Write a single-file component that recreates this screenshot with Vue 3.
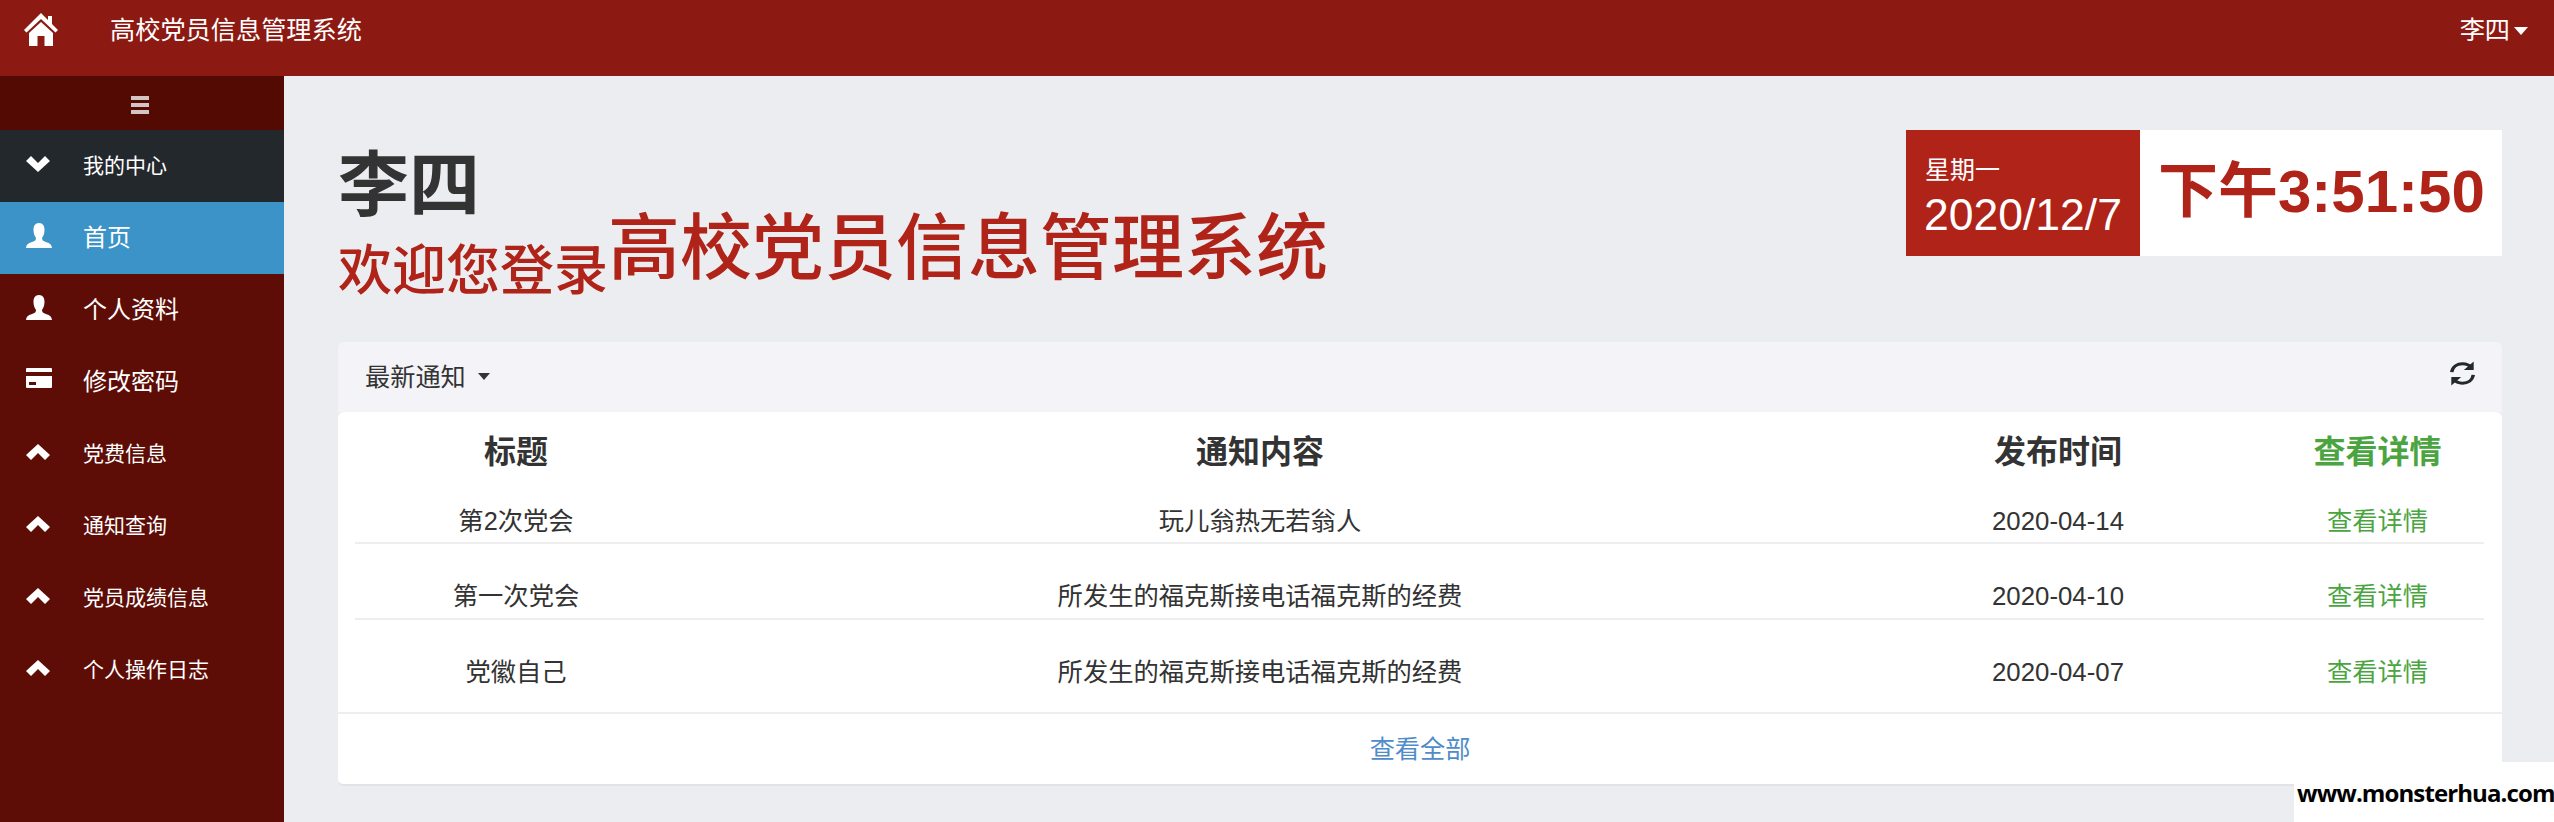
<script setup>
const nav = [
  { label: '我的中心', icon: 'down', kind: 'center', big: false },
  { label: '首页', icon: 'user', kind: 'active', big: true },
  { label: '个人资料', icon: 'user', kind: '', big: true },
  { label: '修改密码', icon: 'card', kind: '', big: true },
  { label: '党费信息', icon: 'up', kind: '', big: false },
  { label: '通知查询', icon: 'up', kind: '', big: false },
  { label: '党员成绩信息', icon: 'up', kind: '', big: false },
  { label: '个人操作日志', icon: 'up', kind: '', big: false },
]
const rows = [
  { title: '第2次党会', body: '玩儿翁热无若翁人', date: '2020-04-14' },
  { title: '第一次党会', body: '所发生的福克斯接电话福克斯的经费', date: '2020-04-10' },
  { title: '党徽自己', body: '所发生的福克斯接电话福克斯的经费', date: '2020-04-07' },
]
</script>

<template>
  <div class="page">
    <header class="topbar">
      <svg class="home" viewBox="0 0 34 33"><path d="M17 0 L24 7 V3 H28 V11 L34 17 L31.500 19.500 L17 6 L2.500 19.500 L0 17Z M5 20 L17 9 L29 20 V33 H20.500 V23 H13.500 V33 H5Z" fill="#fff"/></svg>
      <span class="brand">高校党员信息管理系统</span>
      <span class="account">李四<i class="caret white"></i></span>
    </header>
    <div class="body">
      <aside class="sidebar">
        <div class="toggle">
          <svg viewBox="0 0 18 18" class="burger"><path d="M0 0H18V4H0Z M0 7H18V11H0Z M0 14H18V18H0Z" fill="#d2c5c3"/></svg>
        </div>
        <div v-for="item in nav" :key="item.label" class="nav-item" :class="item.kind">
          <span class="ico">
            <svg v-if="item.icon === 'down'" class="chev" viewBox="0 0 24 16"><path d="M12 16 L24 5 L19 0 L12 7 L5 0 L0 5Z" fill="#fff"/></svg>
            <svg v-else-if="item.icon === 'up'" class="chev" viewBox="0 0 24 16"><path d="M12 0 L24 11 L19 16 L12 9 L5 16 L0 11Z" fill="#fff"/></svg>
            <svg v-else-if="item.icon === 'user'" class="user" viewBox="0 0 26 25"><path d="M13 0 C9 0 7.500 3 7.500 7 C7.500 10 8.500 13 10 15 C10 17 9 18 6 19 C3 20 .5 21 0 25 H26 C25.500 21 23 20 20 19 C17 18 16 17 16 15 C17.500 13 18.500 10 18.500 7 C18.500 3 17 0 13 0Z" fill="#fff"/></svg>
            <svg v-else class="card" viewBox="0 0 26 20"><path d="M1 0H25Q26 0 26 1V4H0V1Q0 0 1 0Z M0 8H26V19Q26 20 25 20H1Q0 20 0 19Z M3 14V17H10V14Z" fill="#fff" fill-rule="evenodd"/></svg>
          </span>
          <span class="label" :class="item.big ? 'big' : 'small'">{{ item.label }}</span>
        </div>
      </aside>
      <main class="main">
        <section class="hero">
          <div class="welcome">
            <h1>李四</h1>
            <div class="sub"><span class="sub-a">欢迎您登录</span><span class="sub-b">高校党员信息管理系统</span></div>
          </div>
          <div class="clock">
            <div class="clock-date">
              <div class="week">星期一</div>
              <div class="date">2020/12/7</div>
            </div>
            <div class="clock-time">下午3:51:50</div>
          </div>
        </section>
        <section class="panel">
          <div class="panel-head">
            <span class="panel-title">最新通知<i class="caret dark"></i></span>
            <svg class="refresh" viewBox="2.500 1 19 22" preserveAspectRatio="none" fill="none">
              <path d="M3.800 10.800 C4.500 6 8 3.500 12 3.500 C15 3.500 17.500 5 19 7" stroke="#23282d" stroke-width="2.600"/>
              <path d="M20.500 1.500 V9 H13Z" fill="#23282d"/>
              <path d="M20.200 13.200 C19.500 18 16 20.500 12 20.500 C9 20.500 6.500 19 5 17" stroke="#23282d" stroke-width="2.600"/>
              <path d="M3.500 22.500 V15 H11Z" fill="#23282d"/>
            </svg>
          </div>
          <div class="panel-card">
            <div class="table">
              <div class="tr th">
                <span>标题</span><span>通知内容</span><span>发布时间</span><span class="green">查看详情</span>
              </div>
              <div v-for="(r, i) in rows" :key="r.date" class="tr td" :class="{ line: i < 2, first: i === 0 }">
                <span>{{ r.title }}</span><span>{{ r.body }}</span><span class="num">{{ r.date }}</span><span class="green">查看详情</span>
              </div>
            </div>
            <div class="panel-foot">查看全部</div>
          </div>
        </section>
      </main>
    </div>
    <div class="watermark">www.monsterhua.com</div>
  </div>
</template>

<style>
html, body { margin: 0; background: #ecedf1; }
</style>

<style scoped>
.page {
  position: relative;
  width: 2554px;
  height: 822px;
  overflow: hidden;
  display: flex;
  flex-direction: column;
  background: #ecedf1;
  color: #333;
  font-family: "Liberation Sans", "Noto Sans CJK SC", sans-serif;
}
.topbar {
  flex: none;
  height: 76px;
  display: flex;
  align-items: flex-start;
  background: #8c1a13;
  color: #fff;
  font-size: 25.200px;
}
.home { width: 34px; height: 33px; margin: 13px 0 0 24px; flex: none; }
.brand { margin: 14px 0 0 52px; line-height: 32px; }
.account { margin: 14px 26px 0 auto; line-height: 32px; display: flex; align-items: center; }
.caret { display: inline-block; width: 0; height: 0; border-left: 7px solid transparent; border-right: 7px solid transparent; }
.caret.white { border-top: 8px solid #fff; margin: 2px 0 0 4px; }
.caret.dark { border-top: 7px solid #333; border-left-width: 6.500px; border-right-width: 6.500px; margin: 4px 0 0 12px; }
.body { flex: 1; display: flex; min-height: 0; }
.sidebar { flex: none; width: 284px; background: #5d0d05; color: #fff; }
.toggle { height: 54px; background: #520a03; display: flex; align-items: center; justify-content: center; padding-right: 4px; box-sizing: border-box; }
.burger { width: 18px; height: 18px; margin-top: 3px; }
.nav-item { height: 72px; display: flex; align-items: center; }
.nav-item.center { background: #23282d; }
.nav-item.active { background: #3c93c7; }
.ico { width: 83px; flex: none; padding-left: 26px; box-sizing: border-box; display: flex; }
.chev { width: 24px; height: 16px; margin-top: -4px; }
.user { width: 26px; height: 25px; margin-top: -5px; }
.card { width: 26px; height: 20px; margin-top: -8px; }
.label { margin-top: -5px; }
.big { font-size: 24px; }
.small { font-size: 21px; }
.main { flex: 1; min-width: 0; padding: 54px 52px 0 54px; }
.hero { display: flex; justify-content: space-between; align-items: flex-start; height: 212px; }
.welcome { margin-top: 16px; }
h1 { margin: 0; font-size: 71px; line-height: 80px; font-weight: 700; color: #333; }
.sub { color: #b02318; display: flex; align-items: flex-end; margin-top: -11px; font-weight: 500; }
.sub-a { font-size: 54px; line-height: 60px; margin: 0 0 4px 0; }
.sub-b { font-size: 72px; line-height: 66px; margin-bottom: 24px; }
.clock { display: flex; height: 126px; }
.clock-date { width: 234px; background: #b02318; color: #fff; padding-left: 18px; box-sizing: border-box; }
.week { font-size: 25px; line-height: 30px; margin-top: 25px; padding-left: 1px; }
.date { font-size: 44.500px; line-height: 50px; margin-top: 5px; }
.clock-time { width: 362px; background: #fff; color: #b02318; font-size: 60px; font-weight: 700; line-height: 124px; padding-left: 18px; box-sizing: border-box; white-space: nowrap; }
.panel-head { height: 70px; background: #f3f3f8; border-radius: 6px 6px 0 0; display: flex; align-items: center; justify-content: space-between; padding: 0 27px; box-sizing: border-box; }
.panel-title { font-size: 25.200px; display: flex; align-items: center; margin-top: -5px; }
.refresh { width: 25px; height: 25px; margin-top: -7px; }
.panel-card { background: #fff; height: 374px; border-radius: 6px; border-bottom: 2px solid #e2e3e8; box-sizing: border-box; display: flex; flex-direction: column; }
.table { height: 302px; flex: none; box-sizing: border-box; padding: 0 18px 0 17px; border-bottom: 2px solid #eeeeef; }
.tr { display: grid; grid-template-columns: 322px 1166px 430px 209px; text-align: center; }
.th { height: 72px; font-size: 32px; font-weight: 700; align-items: center; padding-top: 7px; box-sizing: border-box; line-height: 40px; }
.td { height: 76px; font-size: 25.300px; line-height: 32px; padding-top: 36px; box-sizing: border-box; }
.td.first { height: 60px; padding-top: 21px; }
.td.line { border-bottom: 2px solid #eeeeef; }
.num { font-size: 25.800px; }
.green { color: #4aa540; }
.panel-foot { height: 70px; line-height: 70px; text-align: center; font-size: 25.200px; color: #4f8cc9; }
.watermark { position: absolute; right: 0; bottom: 0; width: 260px; height: 60px; background: #fff; color: #000; font: 700 24px/62px "Open Sans", sans-serif; letter-spacing: -0.900px; white-space: nowrap; box-sizing: border-box; padding-left: 3px; }
</style>
